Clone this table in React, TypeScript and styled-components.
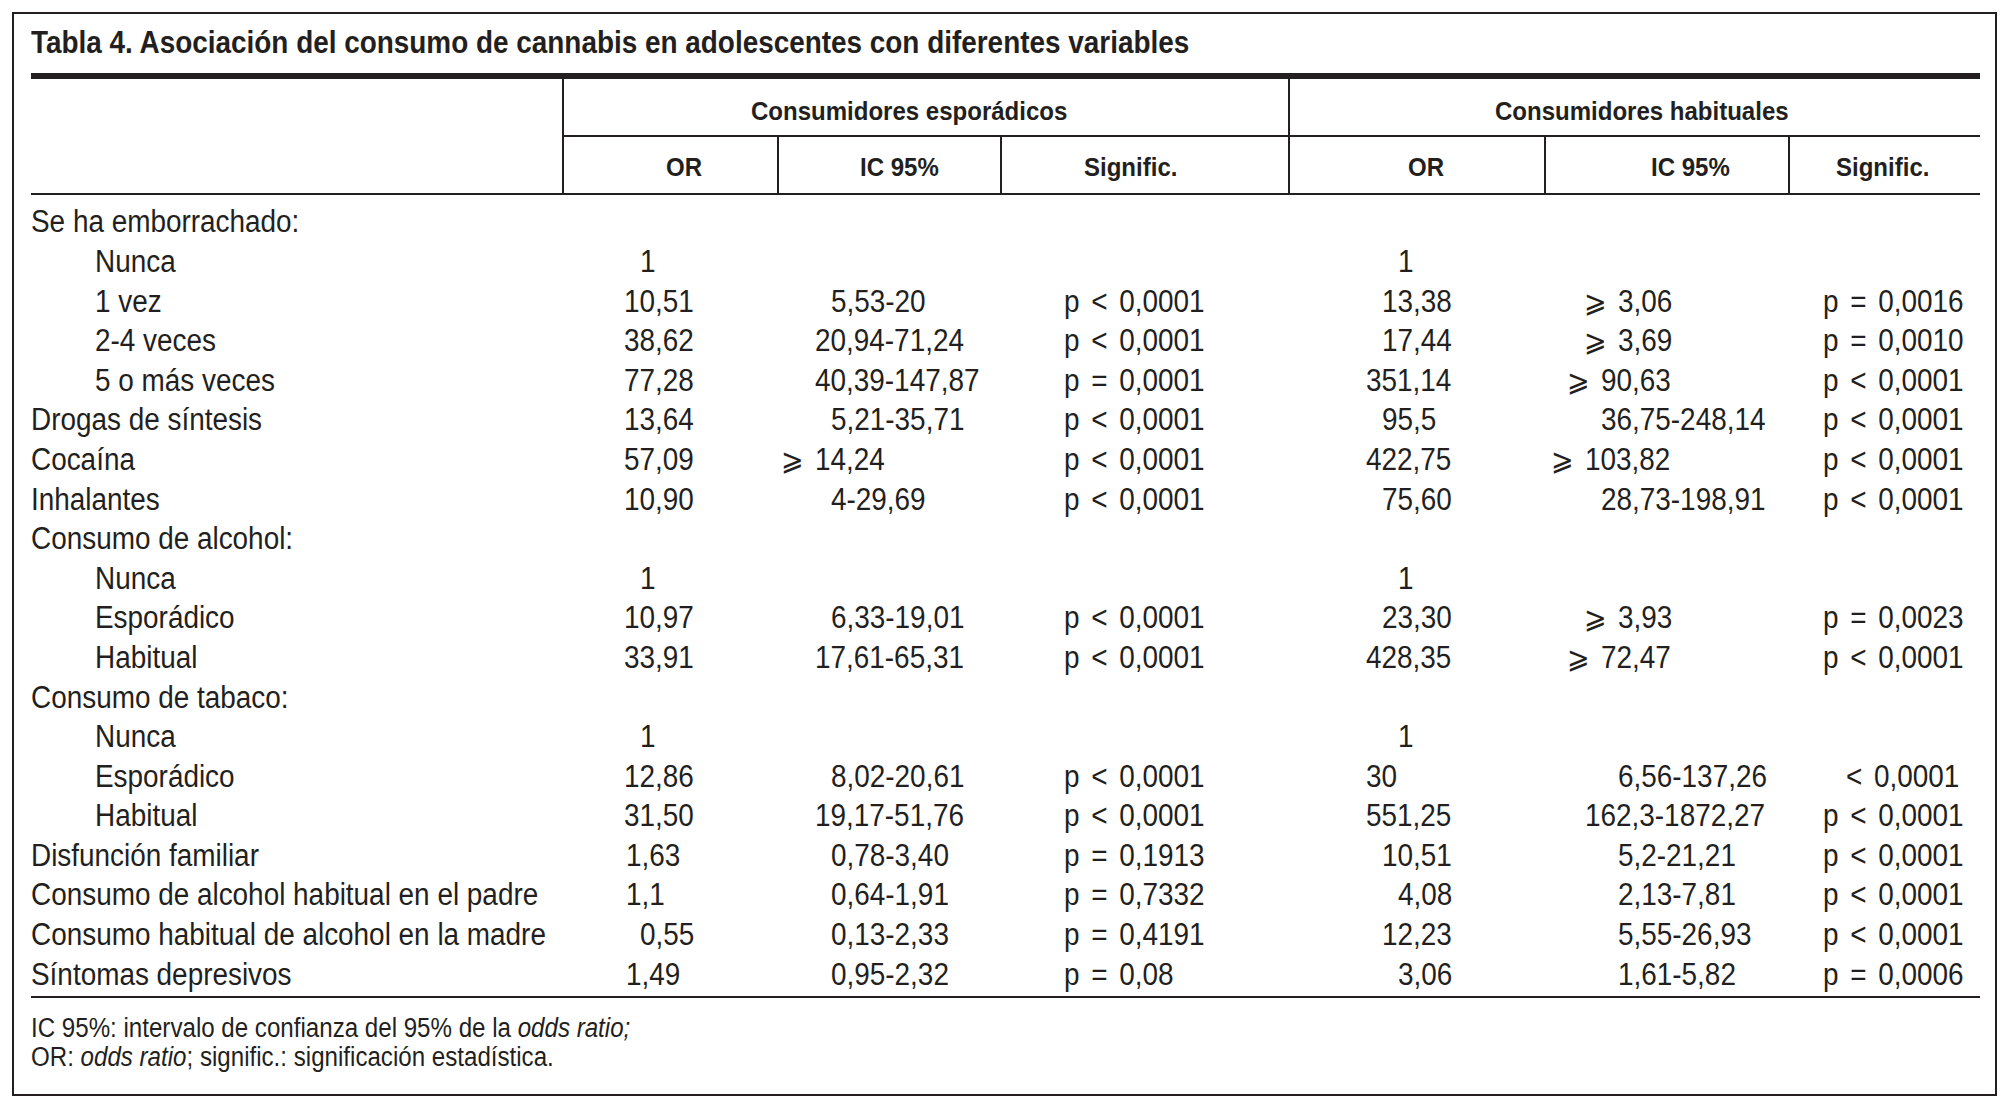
import styled, { createGlobalStyle } from "styled-components";

// Tabla 4 — consumo de cannabis en adolescentes. Print-style table: condensed sans
// (Liberation Sans squeezed to 90%), dark ink rules, values on hand-set tab stops.

const INK = "#231f20";
const FONT = `"Liberation Sans", Arial, sans-serif`;
const SQUEEZE = 0.9;
const COLS = "531px 215px 223px 288px 256px 244px 192px";

const GlobalStyle = createGlobalStyle`
  html, body { margin: 0; padding: 0; background: #fff; }
  body { font-family: ${FONT}; color: ${INK}; }
`;

const Frame = styled.section`
  box-sizing: border-box;
  width: 1985px;
  margin: 12px 0 0 12px;
  padding: 9px 15px 21.4px 17px;
  border: 2px solid ${INK};
`;

// condensed face: the glyphs are narrowed, the layout box keeps its place
const Txt = styled.span`
  display: inline-block;
  transform: scaleX(${SQUEEZE});
  transform-origin: 0 50%;
`;

const Title = styled.h1`
  margin: 0;
  font: bold 31px/40px ${FONT};
  white-space: nowrap;
  transform: scaleX(${SQUEEZE});
  transform-origin: 0 50%;
`;

const ThickRule = styled.div`
  margin-top: 10px;
  height: 6px;
  background: ${INK};
`;

// ── header block ─────────────────────────────────────────────────────────────
const Head = styled.div`
  display: grid;
  grid-template-columns: ${COLS};
  grid-template-rows: 58px 56px;
  border-bottom: 2px solid ${INK};
  font-weight: bold;
  font-size: 26.7px;
  white-space: nowrap;
`;

const Corner = styled.div`
  grid-column: 1;
  grid-row: 1 / 3;
`;

const GroupCell = styled.div<{ $pad: number }>`
  grid-row: 1;
  grid-column: span 3;
  box-sizing: border-box;
  border-left: 2px solid ${INK};
  border-bottom: 2px solid ${INK};
  padding: 8.9px 0 0 ${(p) => p.$pad - 2}px;
  line-height: 47.1px;
`;

const ColHead = styled.div<{ $pad: number }>`
  grid-row: 2;
  box-sizing: border-box;
  border-left: 2px solid ${INK};
  padding: 4.9px 0 0 ${(p) => p.$pad - 2}px;
  line-height: 51.1px;
`;

// ── body ─────────────────────────────────────────────────────────────────────
const Body = styled.div`
  padding: 7.4px 0 1.6px;
  border-bottom: 2px solid ${INK};
  font-size: 31px;
  line-height: 39.6px;
`;

const Row = styled.div`
  display: grid;
  grid-template-columns: ${COLS};
  height: 39.6px;
  white-space: nowrap;
`;

const Label = styled.div<{ $sub?: boolean }>`
  padding-left: ${(p) => (p.$sub ? 64 : 0)}px;
`;

const Value = styled.div<{ $pad: number }>`
  padding-left: ${(p) => p.$pad}px;
  word-spacing: 4.4px;
`;

const Ge = styled.span`
  display: inline-block;
  width: 37.8px;
  font-family: "DejaVu Sans", sans-serif;
  font-size: 30px;
  line-height: 20px;
`;

const Notes = styled.div`
  padding-top: 15.8px;
  font-size: 26.8px;
  line-height: 29.3px;
  white-space: nowrap;
`;

const NoteLine = styled.div`
  transform: scaleX(${SQUEEZE});
  transform-origin: 0 50%;
`;

type Cell = [string, number] | null;
interface RowData {
  label: string;
  sub?: boolean;
  cells?: Cell[];
}

const rows: RowData[] = [
  { label: "Se ha emborrachado:" },
  { label: "Nunca", sub: true, cells: [["1", 78], null, null, ["1", 110], null, null] },
  { label: "1 vez", sub: true, cells: [["10,51", 62], ["5,53-20", 54], ["p < 0,0001", 64], ["13,38", 94], ["⩾ 3,06", 40], ["p = 0,0016", 35]] },
  { label: "2-4 veces", sub: true, cells: [["38,62", 62], ["20,94-71,24", 38], ["p < 0,0001", 64], ["17,44", 94], ["⩾ 3,69", 40], ["p = 0,0010", 35]] },
  { label: "5 o más veces", sub: true, cells: [["77,28", 62], ["40,39-147,87", 38], ["p = 0,0001", 64], ["351,14", 78], ["⩾ 90,63", 23], ["p < 0,0001", 35]] },
  { label: "Drogas de síntesis", cells: [["13,64", 62], ["5,21-35,71", 54], ["p < 0,0001", 64], ["95,5", 94], ["36,75-248,14", 57], ["p < 0,0001", 35]] },
  { label: "Cocaína", cells: [["57,09", 62], ["⩾ 14,24", 4], ["p < 0,0001", 64], ["422,75", 78], ["⩾ 103,82", 7], ["p < 0,0001", 35]] },
  { label: "Inhalantes", cells: [["10,90", 62], ["4-29,69", 54], ["p < 0,0001", 64], ["75,60", 94], ["28,73-198,91", 57], ["p < 0,0001", 35]] },
  { label: "Consumo de alcohol:" },
  { label: "Nunca", sub: true, cells: [["1", 78], null, null, ["1", 110], null, null] },
  { label: "Esporádico", sub: true, cells: [["10,97", 62], ["6,33-19,01", 54], ["p < 0,0001", 64], ["23,30", 94], ["⩾ 3,93", 40], ["p = 0,0023", 35]] },
  { label: "Habitual", sub: true, cells: [["33,91", 62], ["17,61-65,31", 38], ["p < 0,0001", 64], ["428,35", 78], ["⩾ 72,47", 23], ["p < 0,0001", 35]] },
  { label: "Consumo de tabaco:" },
  { label: "Nunca", sub: true, cells: [["1", 78], null, null, ["1", 110], null, null] },
  { label: "Esporádico", sub: true, cells: [["12,86", 62], ["8,02-20,61", 54], ["p < 0,0001", 64], ["30", 78], ["6,56-137,26", 74], ["< 0,0001", 58]] },
  { label: "Habitual", sub: true, cells: [["31,50", 62], ["19,17-51,76", 38], ["p < 0,0001", 64], ["551,25", 78], ["162,3-1872,27", 41], ["p < 0,0001", 35]] },
  { label: "Disfunción familiar", cells: [["1,63", 64], ["0,78-3,40", 54], ["p = 0,1913", 64], ["10,51", 94], ["5,2-21,21", 74], ["p < 0,0001", 35]] },
  { label: "Consumo de alcohol habitual en el padre", cells: [["1,1", 64], ["0,64-1,91", 54], ["p = 0,7332", 64], ["4,08", 110], ["2,13-7,81", 74], ["p < 0,0001", 35]] },
  { label: "Consumo habitual de alcohol en la madre", cells: [["0,55", 78], ["0,13-2,33", 54], ["p = 0,4191", 64], ["12,23", 94], ["5,55-26,93", 74], ["p < 0,0001", 35]] },
  { label: "Síntomas depresivos", cells: [["1,49", 64], ["0,95-2,32", 54], ["p = 0,08", 64], ["3,06", 110], ["1,61-5,82", 74], ["p = 0,0006", 35]] },
];

const colHeads: [string, number][] = [
  ["OR", 103.5],
  ["IC 95%", 83],
  ["Signific.", 84],
  ["OR", 119.5],
  ["IC 95%", 107],
  ["Signific.", 47.5],
];

function ValueText({ text }: { text: string }) {
  if (text.startsWith("⩾")) {
    return (
      <Txt>
        <Ge>⩾</Ge>
        {text.slice(2)}
      </Txt>
    );
  }
  return <Txt>{text}</Txt>;
}

export default function App() {
  return (
    <>
      <GlobalStyle />
      <Frame>
        <Title>Tabla 4. Asociación del consumo de cannabis en adolescentes con diferentes variables</Title>
        <ThickRule />
        <Head>
          <Corner />
          <GroupCell $pad={188.5}>
            <Txt>Consumidores esporádicos</Txt>
          </GroupCell>
          <GroupCell $pad={207}>
            <Txt>Consumidores habituales</Txt>
          </GroupCell>
          {colHeads.map(([t, pad], i) => (
            <ColHead key={i} $pad={pad}>
              <Txt>{t}</Txt>
            </ColHead>
          ))}
        </Head>
        <Body>
          {rows.map((r, i) => (
            <Row key={i}>
              <Label $sub={r.sub}>
                <Txt>{r.label}</Txt>
              </Label>
              {(r.cells ?? []).map((c, j) => (
                <Value key={j} $pad={c ? c[1] : 0}>
                  {c && <ValueText text={c[0]} />}
                </Value>
              ))}
            </Row>
          ))}
        </Body>
        <Notes>
          <NoteLine>
            IC 95%: intervalo de confianza del 95% de la <i>odds ratio;</i>
          </NoteLine>
          <NoteLine>
            OR: <i>odds ratio</i>; signific.: significación estadística.
          </NoteLine>
        </Notes>
      </Frame>
    </>
  );
}
